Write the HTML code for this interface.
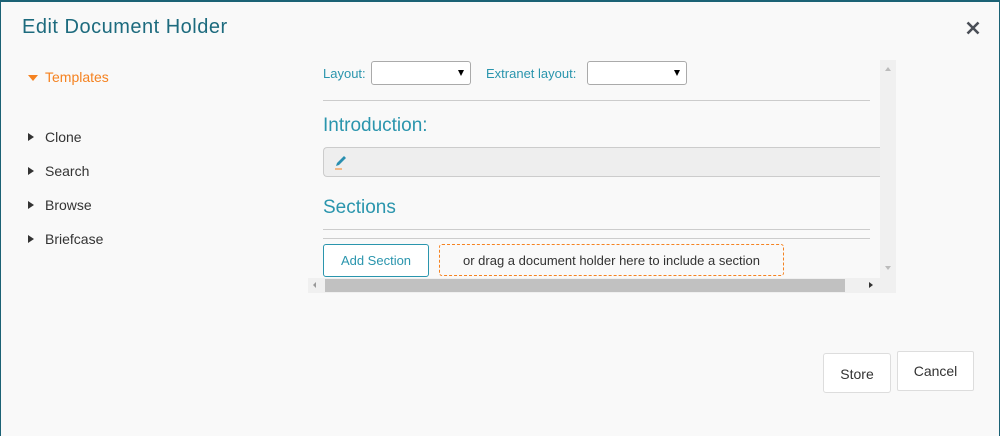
<!DOCTYPE html>
<html><head><style>
*{box-sizing:border-box;margin:0;padding:0}
body{width:1000px;height:436px;overflow:hidden;background:#f9f9f9;font-family:"Liberation Sans",sans-serif;position:relative}
.frame{position:absolute;left:0;top:0;width:1000px;height:436px;border:1px solid #1b6275;border-bottom:none;border-top-width:2px}
.a{position:absolute}
h1{position:absolute;left:22px;top:16px;font-size:20px;font-weight:normal;color:#1d6b7e;letter-spacing:0.5px}
.nav{position:absolute;left:45px;font-size:14px;color:#333}
.tri{position:absolute;left:28px;width:0;height:0;border-top:4px solid transparent;border-bottom:4px solid transparent;border-left:6px solid #333}
.teal{color:#2a95ad}
.sel{position:absolute;height:24px;border:1px solid #aaa;border-radius:3px;background:#fff}
.sel:after{content:"";position:absolute;right:6px;top:8px;border-left:3px solid transparent;border-right:3px solid transparent;border-top:6px solid #000}
.hr{position:absolute;left:323px;width:547px;height:1px;background:#ccc}
.btn{position:absolute;background:#fff;border:1px solid #ddd;border-radius:2px;font-size:14px;color:#333;text-align:center}
</style></head><body>
<div class="frame"></div>
<h1>Edit Document Holder</h1>
<svg class="a" style="left:966px;top:21px" width="14" height="14" viewBox="0 0 14 14"><path d="M1.5 1.5 L12.5 12.5 M12.5 1.5 L1.5 12.5" stroke="#4a4f57" stroke-width="2.6"/></svg>
<div class="a" style="left:28px;top:75px;border-left:5px solid transparent;border-right:5px solid transparent;border-top:6px solid #f58220"></div>
<div class="nav" style="top:69px;color:#f58220">Templates</div>
<div class="tri" style="top:133px"></div><div class="nav" style="top:129px">Clone</div>
<div class="tri" style="top:167px"></div><div class="nav" style="top:163px">Search</div>
<div class="tri" style="top:201px"></div><div class="nav" style="top:197px">Browse</div>
<div class="tri" style="top:235px"></div><div class="nav" style="top:231px">Briefcase</div>

<div class="a teal" style="left:323px;top:66px;font-size:13px">Layout:</div>
<div class="sel" style="left:371px;top:61px;width:100px"></div>
<div class="a teal" style="left:486px;top:66px;font-size:13px">Extranet layout:</div>
<div class="sel" style="left:587px;top:61px;width:100px"></div>
<div class="hr" style="top:100px"></div>
<div class="a teal" style="left:323px;top:115px;font-size:19px">Introduction:</div>
<div class="a" style="left:323px;top:147px;width:560px;height:30px;background:#eee;border:1px solid #ccc;border-right:none;border-radius:4px 0 0 4px"></div>
<svg class="a" style="left:333px;top:154px" width="16" height="16" viewBox="0 0 16 16"><path d="M3 12 L4 9 L11 2 L13 4 L6 11 Z" fill="#2a8fb0"/><path d="M2 15 H9" stroke="#f58220" stroke-width="1"/></svg>
<div class="a teal" style="left:323px;top:197px;font-size:19px">Sections</div>
<div class="hr" style="top:229px"></div>
<div class="hr" style="top:238px"></div>
<div class="a teal" style="left:323px;top:244px;width:106px;height:33px;border:1px solid #2a95ad;border-radius:3px;background:#fff;font-size:13px;text-align:center;line-height:31px">Add Section</div>
<div class="a" style="left:439px;top:244px;width:345px;height:32px;border:1px dashed #f58220;border-radius:3px;font-size:13px;color:#333;text-align:center;line-height:32px">or drag a document holder here to include a section</div>
<div class="a" style="left:880px;top:60px;width:16px;height:218px;background:#f0f0f0"></div>
<div class="a" style="left:885px;top:67px;border-left:3px solid transparent;border-right:3px solid transparent;border-bottom:4px solid #bbb"></div>
<div class="a" style="left:885px;top:266px;border-left:3px solid transparent;border-right:3px solid transparent;border-top:4px solid #bbb"></div>
<div class="a" style="left:308px;top:278px;width:588px;height:15px;background:#f0f0f0"></div>
<div class="a" style="left:325px;top:279px;width:520px;height:13px;background:#c1c1c1"></div>
<div class="a" style="left:313px;top:282px;border-top:3px solid transparent;border-bottom:3px solid transparent;border-right:3px solid #999"></div>
<div class="a" style="left:869px;top:282px;border-top:3px solid transparent;border-bottom:3px solid transparent;border-left:4px solid #333"></div>

<div class="btn" style="left:823px;top:353px;width:68px;height:40px;line-height:40px;border-radius:3px">Store</div>
<div class="btn" style="left:897px;top:351px;width:77px;height:40px;line-height:38px">Cancel</div>
</body></html>
